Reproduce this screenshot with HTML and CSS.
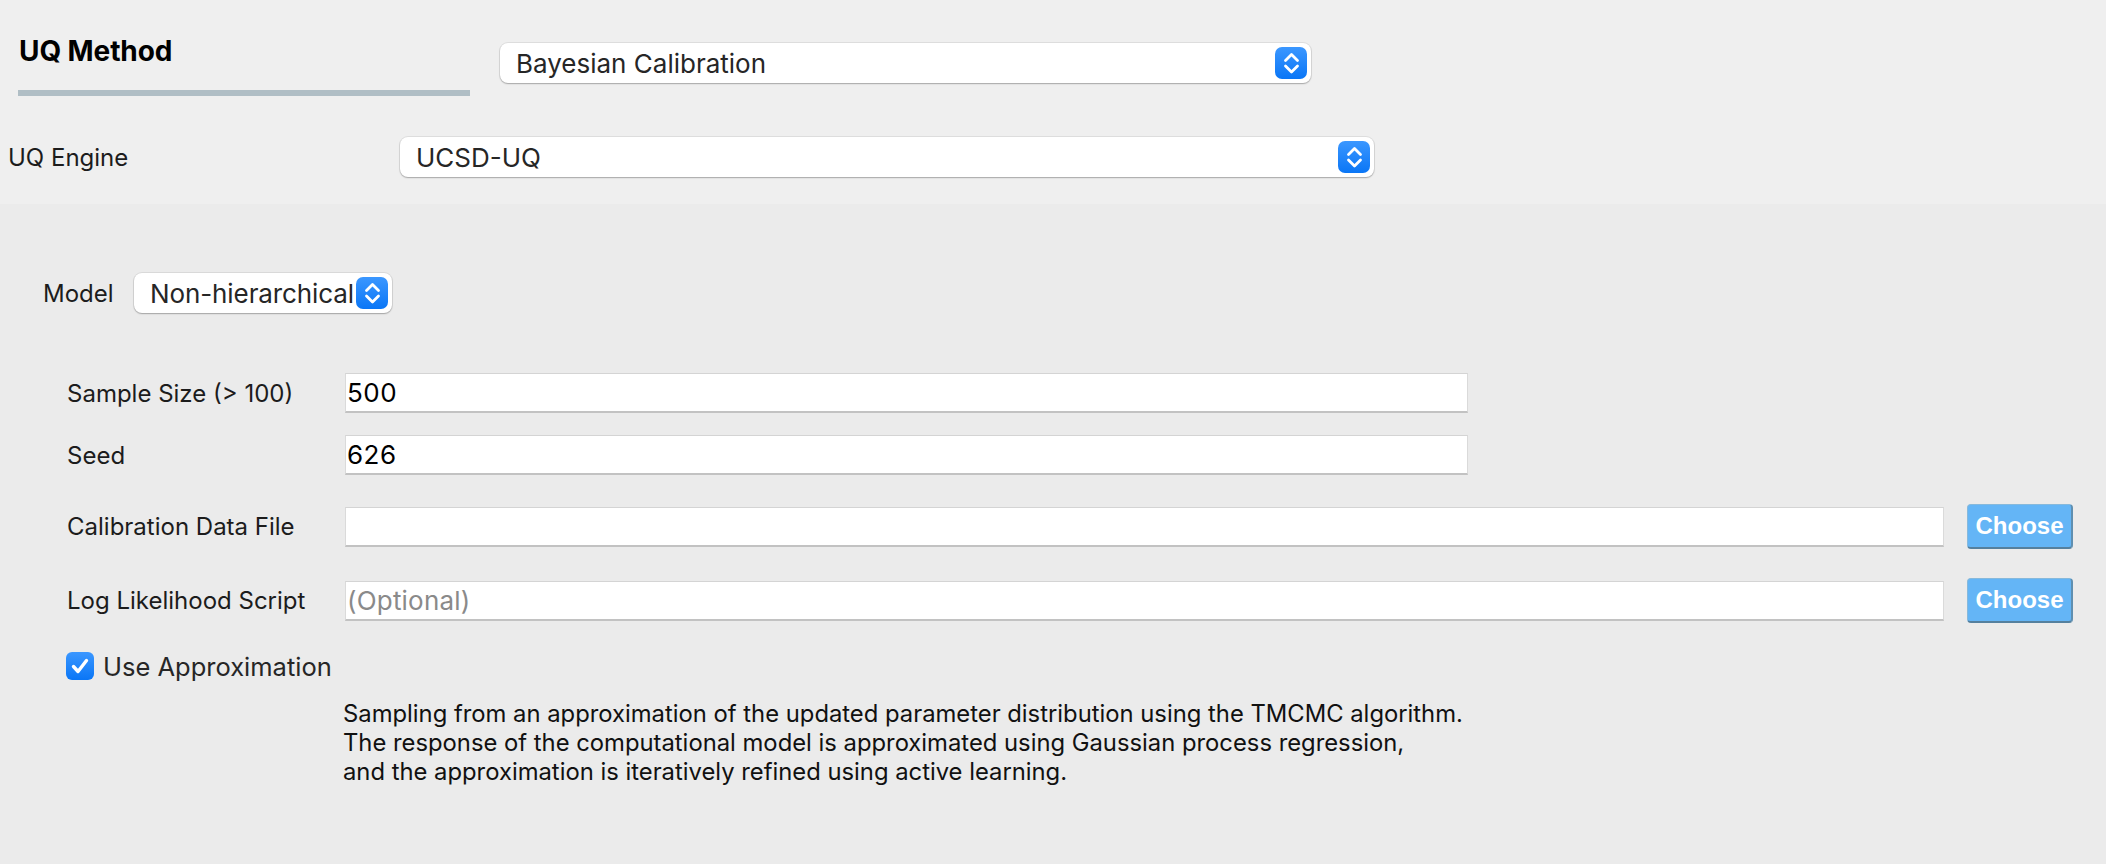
FILE: index.html
```html
<!DOCTYPE html>
<html>
<head>
<meta charset="utf-8">
<link rel="stylesheet" href="styles.css">
</head>
<body>
<div class="top">
  <div class="method-row">
    <div class="title-block">
      <div class="title">UQ Method</div>
      <div class="title-bar"></div>
    </div>
    <div class="select select-method">
      <span class="select-text">Bayesian Calibration</span>
      <span class="stepper"><svg width="32" height="32" viewBox="0 0 32 32"><polyline points="10.5,13.5 16.5,7.5 22.5,13.5" fill="none" stroke="#fff" stroke-width="2.8" stroke-linecap="round" stroke-linejoin="round"/><polyline points="10.5,19 16.5,25 22.5,19" fill="none" stroke="#fff" stroke-width="2.8" stroke-linecap="round" stroke-linejoin="round"/></svg></span>
    </div>
  </div>
  <div class="engine-row">
    <span class="engine-label">UQ Engine</span>
    <div class="select select-engine">
      <span class="select-text">UCSD-UQ</span>
      <span class="stepper"><svg width="32" height="32" viewBox="0 0 32 32"><polyline points="10.5,13.5 16.5,7.5 22.5,13.5" fill="none" stroke="#fff" stroke-width="2.8" stroke-linecap="round" stroke-linejoin="round"/><polyline points="10.5,19 16.5,25 22.5,19" fill="none" stroke="#fff" stroke-width="2.8" stroke-linecap="round" stroke-linejoin="round"/></svg></span>
    </div>
  </div>
</div>
<div class="panel">
  <div class="model-row">
    <span class="model-label">Model</span>
    <div class="select select-model">
      <span class="select-text">Non-hierarchical</span>
      <span class="stepper"><svg width="32" height="32" viewBox="0 0 32 32"><polyline points="10.5,13.5 16.5,7.5 22.5,13.5" fill="none" stroke="#fff" stroke-width="2.8" stroke-linecap="round" stroke-linejoin="round"/><polyline points="10.5,19 16.5,25 22.5,19" fill="none" stroke="#fff" stroke-width="2.8" stroke-linecap="round" stroke-linejoin="round"/></svg></span>
    </div>
  </div>
  <div class="fields">
    <div class="field field-first">
      <span class="field-label">Sample Size (&gt; 100)</span>
      <div class="input input-short">500</div>
    </div>
    <div class="field field-second">
      <span class="field-label">Seed</span>
      <div class="input input-short">626</div>
    </div>
    <div class="field field-btn">
      <span class="field-label">Calibration Data File</span>
      <div class="input input-long"></div>
      <div class="choose">Choose</div>
    </div>
    <div class="field field-btn">
      <span class="field-label">Log Likelihood Script</span>
      <div class="input input-long placeholder">(Optional)</div>
      <div class="choose">Choose</div>
    </div>
    <div class="check-row">
      <span class="checkbox"><svg width="28" height="28" viewBox="0 0 28 28"><polyline points="7.5,14.5 12,19.5 20.5,8.5" fill="none" stroke="#fff" stroke-width="3.4" stroke-linecap="round" stroke-linejoin="round"/></svg></span>
      <span class="check-label">Use Approximation</span>
    </div>
    <p class="desc">Sampling from an approximation of the updated parameter distribution using the TMCMC algorithm.<br>The response of the computational model is approximated using Gaussian process regression,<br>and the approximation is iteratively refined using active learning.</p>
  </div>
</div>
</body>
</html>
```
FILE: styles.css
```css
* { box-sizing: border-box; }
html, body { margin: 0; padding: 0; }
body {
  width: 2106px;
  height: 864px;
  overflow: hidden;
  background: #ebebeb;
  font-family: Inter, "Liberation Sans", Arial, sans-serif;
  color: #1c1c1c;
}
.top {
  background: #efefef;
  height: 204px;
  padding-top: 34px;
}
.method-row {
  display: flex;
  align-items: flex-start;
}
.title-block {
  margin-left: 18px;
  width: 452px;
}
.title {
  font-size: 28px;
  font-weight: 700;
  line-height: 34px;
  margin-left: 1px;
  color: #000;
  letter-spacing: -0.1px;
}
.title-bar {
  height: 6px;
  background: #b0bec5;
  margin-top: 22px;
}
.select {
  display: flex;
  align-items: center;
  height: 40px;
  background: #fff;
  border-radius: 8px;
  box-shadow: 0 0 0 1px rgba(0, 0, 0, 0.07), 0 1px 1.5px rgba(0, 0, 0, 0.25);
  padding-left: 16px;
  padding-right: 4px;
}
.select-text {
  flex: 1;
  font-size: 26px;
  color: #262626;
  white-space: nowrap;
  overflow: hidden;
}
.stepper {
  width: 32px;
  height: 32px;
  flex: none;
  border-radius: 7px;
  background: linear-gradient(#3b97ff, #0a76f6);
  display: flex;
}
.select-method {
  margin-left: 30px;
  margin-top: 9px;
  width: 811px;
}
.engine-row {
  display: flex;
  align-items: center;
  margin-top: 41px;
  padding-left: 8px;
}
.engine-label {
  width: 392px;
  font-size: 24px;
}
.select-engine {
  width: 974px;
}
.panel {
  padding-top: 69px;
}
.model-row {
  display: flex;
  align-items: center;
  padding-left: 43px;
}
.model-label {
  width: 91px;
  font-size: 24px;
}
.select-model {
  width: 258px;
  padding-left: 16px;
}
.select-model .select-text {
  letter-spacing: -0.1px;
}
.fields {
  padding-left: 67px;
  display: flex;
  flex-direction: column;
}
.field {
  display: flex;
  align-items: center;
}
.field-first { margin-top: 60px; }
.field-second { margin-top: 22px; }
.field-btn { margin-top: 29px; }
.field-label {
  width: 278px;
  font-size: 24px;
}
.input {
  height: 40px;
  background: #fff;
  border: 1px solid #dadada;
  border-top-color: #d4d4d4;
  border-bottom: 2px solid #c2c2c2;
  font-size: 26px;
  padding-left: 1px;
  display: flex;
  align-items: center;
  color: #000;
  letter-spacing: 0.5px;
}
.placeholder { color: #8a8a8a; letter-spacing: 0.2px; }
.input-short { width: 1123px; }
.input-long { width: 1599px; }
.choose {
  margin-left: 23px;
  width: 106px;
  height: 45px;
  background: #64b5f6;
  border: 1px solid #86b9dc;
  border-right: 2px solid #5f8fb0;
  border-bottom: 2px solid #55809e;
  border-radius: 4px;
  color: #fff;
  font-family: "Liberation Sans", Arial, sans-serif;
  font-weight: 700;
  font-size: 24px;
  display: flex;
  align-items: center;
  justify-content: center;
}
.check-row {
  display: flex;
  align-items: center;
  margin-top: 29px;
  margin-left: -1px;
  height: 28px;
}
.checkbox {
  width: 28px;
  height: 28px;
  border-radius: 6px;
  background: linear-gradient(#3b97ff, #0a76f6);
  display: flex;
}
.check-label {
  margin-left: 9px;
  font-size: 25.5px;
  color: #262626;
}
.desc {
  margin: 19px 0 0 276px;
  font-size: 23.8px;
  line-height: 29px;
  color: #111;
}
```
